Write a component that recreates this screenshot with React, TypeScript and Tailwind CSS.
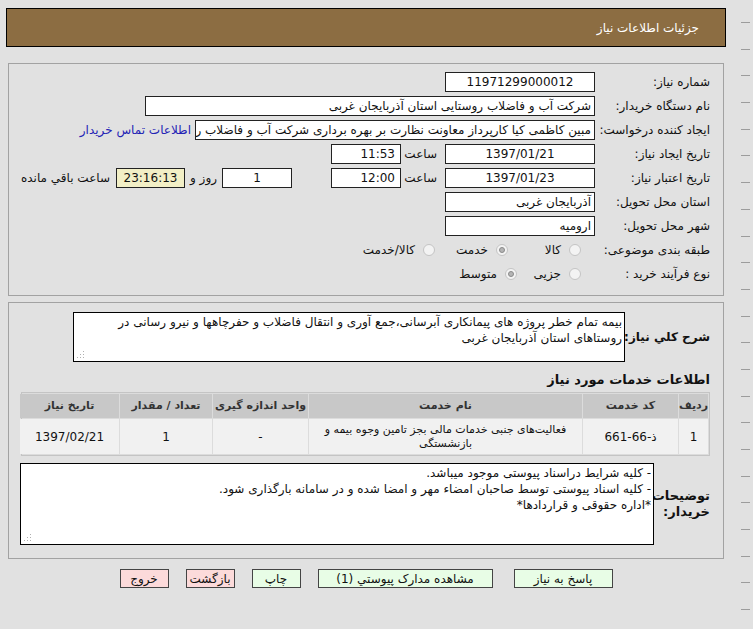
const font = "font-['Tahoma','DejaVu_Sans',sans-serif]";

const Box = ({
  w,
  children,
  align = "start",
  bg = "bg-white",
}: {
  w: string;
  children?: React.ReactNode;
  align?: "start" | "center";
  bg?: string;
}) => (
  <div
    className={`${w} ${bg} h-[20px] shrink-0 overflow-hidden whitespace-nowrap border border-[#222] px-[3px] leading-[18px] ${
      align === "center" ? "text-center" : "text-right"
    }`}
  >
    {children}
  </div>
);

const Radio = ({ checked }: { checked?: boolean }) => (
  <span className="flex h-[12px] w-[12px] shrink-0 items-center justify-center rounded-full border border-[#c4c4c4] bg-[#f3f3f3]">
    {checked && <span className="h-[6px] w-[6px] rounded-full border border-[#8a8a8a] bg-[#b5b5b5]" />}
  </span>
);

const Grip = () => (
  <svg className="absolute bottom-[2px] left-[2px]" width="9" height="9" viewBox="0 0 9 9">
    {[
      [7, 1],
      [4, 4],
      [7, 4],
      [1, 7],
      [4, 7],
      [7, 7],
    ].map(([x, y]) => (
      <rect key={`${x}-${y}`} x={x} y={y} width="1" height="1" fill="#b0b0b0" />
    ))}
  </svg>
);

const Row = ({ label, children }: { label: string; children?: React.ReactNode }) => (
  <div className="flex h-[24px] items-center">
    <div className="w-[115px] shrink-0">{label}</div>
    {children}
  </div>
);

const Btn = ({ label, tone }: { label: string; tone: "green" | "pink" }) => (
  <div
    className={`flex h-[19px] items-center justify-center whitespace-nowrap border border-[#444] px-2 ${
      tone === "green" ? "bg-[#e8fde6]" : "bg-[#fcdada]"
    }`}
  >
    {label}
  </div>
);

const columns = ["ردیف", "کد خدمت", "نام خدمت", "واحد اندازه گیری", "تعداد / مقدار", "تاریخ نیاز"];

export default function App() {
  return (
    <div
      dir="ltr"
      className={`${font} flex h-[629px] w-[753px] overflow-hidden bg-[#e1e1e1] text-[12px] text-[#111]`}
    >
      <div dir="rtl" className="ml-[6px] w-[720px] shrink-0 pt-[8px]">
        <div className="flex h-[39px] items-center border border-black bg-[#8c6d42] pr-[26px] text-white">
          جزئیات اطلاعات نیاز
        </div>

        <section className="mx-[2px] mt-[16px] border border-[#a2a2a2] pb-[9px] pr-[13px] pt-[6px]">
          <Row label="شماره نیاز:">
            <Box w="w-[150px]" align="center">11971299000012</Box>
          </Row>
          <Row label="نام دستگاه خریدار:">
            <Box w="w-[450px]">شرکت آب و فاضلاب روستایی استان آذربایجان غربی</Box>
          </Row>
          <Row label="ایجاد کننده درخواست:">
            <Box w="w-[400px]">
              مبین کاظمی کیا کارپرداز معاونت نظارت بر بهره برداری شرکت آب و فاضلاب روستا
            </Box>
            <span className="mr-[4px] whitespace-nowrap text-[#2323b5]">اطلاعات تماس خریدار</span>
          </Row>
          <Row label="تاریخ ایجاد نیاز:">
            <Box w="w-[150px]" align="center">1397/01/21</Box>
            <span className="w-[44px] shrink-0 pr-[8px]">ساعت</span>
            <Box w="w-[70px]">
              <span className="pr-[2px]">11:53</span>
            </Box>
          </Row>
          <Row label="تاریخ اعتبار نیاز:">
            <Box w="w-[150px]" align="center">1397/01/23</Box>
            <span className="w-[44px] shrink-0 pr-[8px]">ساعت</span>
            <Box w="w-[70px]">
              <span className="pr-[2px]">12:00</span>
            </Box>
            <div className="mr-[39px]">
              <Box w="w-[70px]" align="center">1</Box>
            </div>
            <span className="mx-[5px] whitespace-nowrap">روز و</span>
            <Box w="w-[69px]" align="center" bg="bg-[#f2efc6]">
              23:16:13
            </Box>
            <span className="mr-[6px] whitespace-nowrap">ساعت باقي مانده</span>
          </Row>
          <Row label="استان محل تحویل:">
            <Box w="w-[150px]">آذربایجان غربی</Box>
          </Row>
          <Row label="شهر محل تحویل:">
            <Box w="w-[150px]">ارومیه</Box>
          </Row>
          <Row label="طبقه بندی موضوعی:">
            <div className="mr-[14px] flex">
              {[
                { t: "کالا", c: false },
                { t: "خدمت", c: true },
                { t: "کالا/خدمت", c: false },
              ].map((o) => (
                <div key={o.t} className="flex w-[73px] items-center gap-[8px]">
                  <Radio checked={o.c} />
                  <span className="whitespace-nowrap">{o.t}</span>
                </div>
              ))}
            </div>
          </Row>
          <Row label="نوع فرآیند خرید :">
            <div className="mr-[14px] flex">
              {[
                { t: "جزیی", c: false },
                { t: "متوسط", c: true },
              ].map((o) => (
                <div key={o.t} className="flex w-[64px] items-center gap-[8px]">
                  <Radio checked={o.c} />
                  <span className="whitespace-nowrap">{o.t}</span>
                </div>
              ))}
            </div>
          </Row>
        </section>

        <section className="mx-[2px] mt-[6px] border border-[#a2a2a2] pb-[13px] pl-[11px] pr-[13px] pt-[9px]">
          <div className="flex items-center">
            <div className="w-[85px] shrink-0 whitespace-nowrap text-[12px] font-bold">شرح کلي نیاز:</div>
            <div className="relative h-[50px] w-[552px] border border-black bg-white px-[2px] pt-[1px] leading-[16px]">
              <div className="whitespace-nowrap">
                بیمه تمام خطر پروژه های پیمانکاری آبرسانی،جمع آوری و انتقال فاضلاب و حفرچاهها و نیرو رسانی در
              </div>
              <div>روستاهای استان آذربایجان غربی</div>
              <Grip />
            </div>
          </div>

          <div className="mt-[10px] h-[16px] text-[13px] font-bold leading-[16px]">اطلاعات خدمات مورد نیاز</div>

          <div className="mt-[4px] grid w-[689px] grid-cols-[29px_95px_273px_95px_92px_99px] gap-[1px] border border-[#c4c4c4] bg-[#dcdcdc] p-[1px]">
            {columns.map((c) => (
              <div
                key={c}
                className="flex h-[24px] items-center justify-center bg-[#c8c8c8] text-[11px] font-bold text-[#333]"
              >
                {c}
              </div>
            ))}
            <div className="flex h-[35px] items-center justify-center bg-[#f1f1f1]">1</div>
            <div className="flex items-center justify-center bg-[#f1f1f1]">ذ-66-661</div>
            <div className="flex flex-col items-center justify-center bg-[#f1f1f1] text-[11px] leading-[14px]">
              <span>فعالیت‌های جنبی خدمات مالی بجز تامین وجوه بیمه و</span>
              <span>بازنشستگی</span>
            </div>
            <div className="flex items-center justify-center bg-[#f1f1f1]">-</div>
            <div className="flex items-center justify-center bg-[#f1f1f1]">1</div>
            <div className="flex items-center justify-center bg-[#f1f1f1]">1397/02/21</div>
          </div>

          <div className="mt-[7px] flex items-center">
            <div className="w-[56px] shrink-0 text-[13px] font-bold leading-[16px]">
              توضیحات
              <br />
              خریدار:
            </div>
            <div className="relative h-[82px] w-[636px] border border-black bg-white px-[2px] pt-[1px] leading-[16px]">
              <div className="whitespace-nowrap">- کلیه شرایط دراسناد پیوستی موجود میباشد.</div>
              <div className="whitespace-nowrap">
                - کلیه اسناد پیوستی توسط صاحبان امضاء مهر و امضا شده و در سامانه بارگذاری شود.
              </div>
              <div className="whitespace-nowrap">*اداره حقوقی و قراردادها*</div>
              <Grip />
            </div>
          </div>
        </section>

        <div className="mt-[10px] flex justify-center gap-[17px]">
          <div className="w-[99px]">
            <Btn label="پاسخ به نیاز" tone="green" />
          </div>
          <div className="mr-[4px] w-[175px]">
            <Btn label="مشاهده مدارک پیوستي (1)" tone="green" />
          </div>
          <div className="w-[49px]">
            <Btn label="چاپ" tone="green" />
          </div>
          <div className="w-[49px]">
            <Btn label="بازگشت" tone="pink" />
          </div>
          <div className="w-[49px]">
            <Btn label="خروج" tone="pink" />
          </div>
        </div>
      </div>

      <div className="ml-auto flex w-[12px] flex-col gap-[25.7px] pt-[22px]">
        {Array.from({ length: 23 }).map((_, i) => (
          <div key={i} className="h-[1px] w-[9px] bg-[#9c9c9c]" />
        ))}
      </div>
    </div>
  );
}
